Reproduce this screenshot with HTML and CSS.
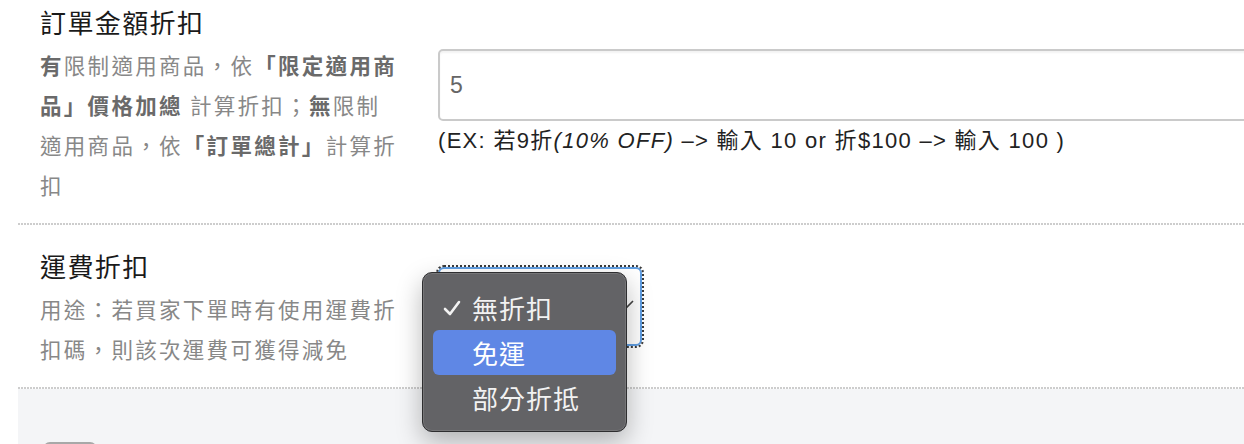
FILE: index.html
```html
<!DOCTYPE html>
<html lang="zh-Hant">
<head>
<meta charset="utf-8">
<title>折扣設定</title>
<link rel="stylesheet" href="styles.css">
</head>
<body>
<div class="form">
  <div class="row first">
    <div class="label">
      <div class="title">訂單金額折扣</div>
      <div class="desc"><b>有</b>限制適用商品，依<b>「限定適用商品」價格加總</b> 計算折扣；<b>無</b>限制適用商品，依<b>「訂單總計」</b>計算折扣</div>
    </div>
    <div class="field">
      <input class="text-input" type="text" value="5">
      <div class="help">(EX: 若9折<i>(10% OFF)</i> –&gt; 輸入 10 or 折$100 –&gt; 輸入 100 )</div>
    </div>
  </div>
  <div class="row">
    <div class="label">
      <div class="title">運費折扣</div>
      <div class="desc">用途：若買家下單時有使用運費折扣碼，則該次運費可獲得減免</div>
    </div>
    <div class="field">
      <div class="select">
        <span class="select-value">無折扣</span>
        <svg class="chevron" width="14" height="10" viewBox="0 0 14 10"><polyline points="1,2 7,8 13,2" fill="none" stroke="#444" stroke-width="1.6"/></svg>
        <div class="menu">
          <div class="item">
            <svg class="check" width="18" height="16" viewBox="0 0 18 16"><polyline points="2,9 7,14 16,2" fill="none" stroke="#f2f2f2" stroke-width="2.6" stroke-linecap="round" stroke-linejoin="round"/></svg>
            無折扣
          </div>
          <div class="item active">免運</div>
          <div class="item">部分折抵</div>
        </div>
      </div>
    </div>
  </div>
  <div class="footer">
    <button class="btn" type="button"></button>
  </div>
</div>
</body>
</html>
```

FILE: styles.css
```css
html, body {
  margin: 0;
  padding: 0;
  background: #ffffff;
  overflow: hidden;
  height: 444px;
}

body {
  font-family: "Liberation Sans", "Noto Sans CJK TC", sans-serif;
  color: #1a1a1a;
}

.form {
  margin-left: 18px;
  width: 1260px;
}

.row {
  display: flex;
  align-items: center;
  gap: 36px;
  padding: 26px 0 20px 22px;
  background-image: linear-gradient(to right, #cdcdcd 2px, transparent 2px);
  background-size: 3px 2px;
  background-repeat: repeat-x;
  background-position: left bottom;
}

.row.first {
  padding-top: 7px;
}

.label {
  width: 362px;
  flex: none;
}

.title {
  font-family: "Noto Sans CJK TC", sans-serif;
  font-size: 26px;
  line-height: 30px;
  letter-spacing: 1.4px;
  color: #1a1a1a;
}

.desc {
  margin-top: 8px;
  font-family: "Noto Sans CJK TC", sans-serif;
  font-size: 21.5px;
  line-height: 40px;
  letter-spacing: 2.3px;
  color: #888888;
}

.desc b {
  font-weight: 700;
  color: #6a6a6a;
}

.field {
  flex: 1;
  padding-bottom: 8px;
}

.text-input {
  display: block;
  box-sizing: border-box;
  width: 820px;
  height: 72px;
  margin: 0;
  padding: 0 10px;
  border: 2px solid #cacaca;
  border-radius: 5px;
  box-shadow: inset 0 2px 2px rgba(0, 0, 0, 0.05);
  font-family: "Liberation Sans", sans-serif;
  font-size: 23px;
  color: #666666;
  background: #ffffff;
  outline: none;
}

.help {
  margin-top: 6px;
  font-size: 22px;
  line-height: 28px;
  letter-spacing: 1.3px;
  color: #222222;
}

.select {
  position: relative;
  box-sizing: border-box;
  width: 204px;
  height: 79px;
  border: 2px solid #5f9ee3;
  border-radius: 6px;
  outline: 2px dotted #3a3a3a;
  outline-offset: 0;
  display: flex;
  align-items: center;
  padding: 0 10px;
  font-family: "Noto Sans CJK TC", sans-serif;
  font-size: 22px;
  color: #333;
  background: #ffffff;
}

.select-value {
  flex: 1;
}

.chevron {
  position: absolute;
  right: 6px;
  top: 30px;
}

.menu {
  position: absolute;
  left: -18px;
  top: 3px;
  box-sizing: border-box;
  width: 205px;
  height: 160px;
  padding: 12px 10px;
  background: #636366;
  border: 1px solid #2e2e30;
  border-radius: 10px;
  box-shadow: inset 0 0 0 1px rgba(255, 255, 255, 0.12), 0 10px 26px rgba(0, 0, 0, 0.28);
  z-index: 10;
}

.item {
  position: relative;
  height: 45px;
  line-height: 45px;
  padding-left: 39px;
  border-radius: 6px;
  font-family: "Noto Sans CJK TC", sans-serif;
  font-size: 26px;
  color: #f2f2f2;
  letter-spacing: 1px;
}

.item.active {
  background: #5f87e5;
  color: #ffffff;
}

.check {
  position: absolute;
  left: 10px;
  top: 15px;
}

.footer {
  background: #f4f5f7;
  height: 80px;
  padding: 53px 0 0 25px;
  box-sizing: border-box;
}

.btn {
  display: block;
  width: 54px;
  height: 40px;
  margin: 0;
  border: 2px solid #a8a8a8;
  border-radius: 7px;
  background: #ffffff;
}
```
